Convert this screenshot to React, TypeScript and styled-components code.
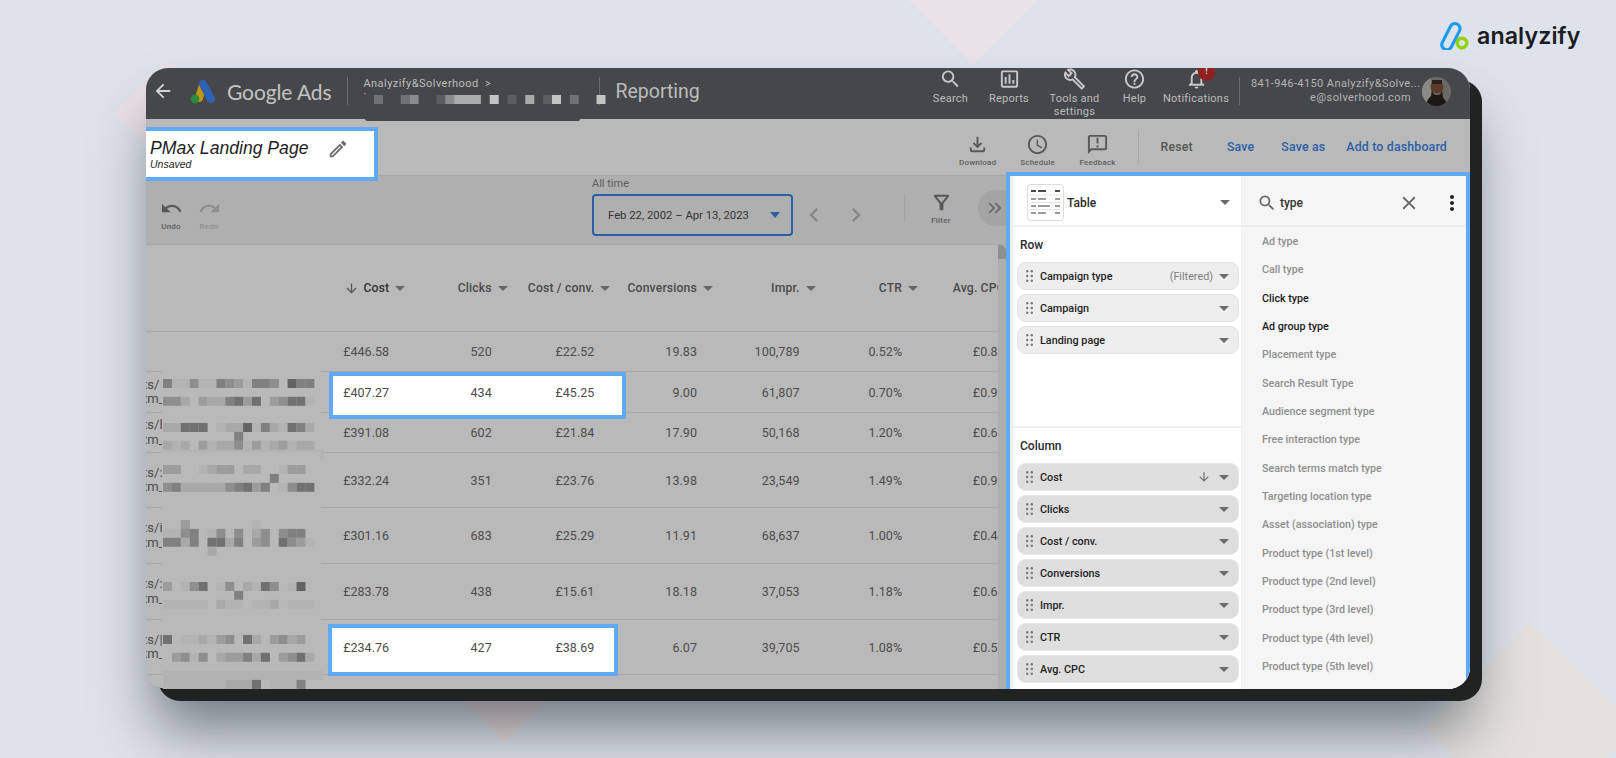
import React from "react";
import styled, { createGlobalStyle } from "styled-components";
import {
  MdArrowBack,
  MdArrowDownward,
  MdChevronLeft,
  MdChevronRight,
  MdClose,
  MdHelpOutline,
  MdKeyboardDoubleArrowRight,
  MdMoreVert,
  MdOutlineAssessment,
  MdOutlineBuild,
  MdOutlineEdit,
  MdOutlineFileDownload,
  MdOutlineFilterAlt,
  MdOutlineNotifications,
  MdOutlineAnnouncement,
  MdOutlineSchedule,
  MdRedo,
  MdSearch,
  MdUndo,
} from "react-icons/md";

const GlobalStyle = createGlobalStyle`
  html, body {
    margin: 0;
    overflow: hidden;
    background: #dee2ea;
  }
  * { box-sizing: border-box; }
`;

const Stage = styled.div`
  position: relative;
  width: 1616px;
  height: 758px;
  overflow: hidden;
  padding: 68px 0 0 146px;
  background: #dee2ea;
  font-family: Roboto, "Liberation Sans", sans-serif;
`;

const Diamond = styled.div<{ $x: number; $y: number; $r: number; $c: string }>`
  position: absolute;
  left: ${(p) => p.$x - p.$r}px;
  top: ${(p) => p.$y - p.$r}px;
  width: ${(p) => p.$r * 2}px;
  height: ${(p) => p.$r * 2}px;
  background: ${(p) => p.$c};
  clip-path: polygon(50% 0, 100% 50%, 50% 100%, 0 50%);
`;

const LogoBox = styled.div`
  position: absolute;
  left: 1440px;
  top: 22px;
  display: flex;
  align-items: center;
  gap: 8px;
  color: #1b1c24;
  font-family: Inter, sans-serif;
  font-weight: 600;
  font-size: 23.2px;
  letter-spacing: 0.1px;
`;

const Card = styled.div`
  position: relative;
  width: 1324px;
  height: 621px;
  border-radius: 22px;
  overflow: hidden;
  display: flex;
  flex-direction: column;
  background: #b9b9b9;
`;

const CardShadow = styled.div`
  position: relative;
  width: 1324px;
  height: 621px;
  border-radius: 22px;
  box-shadow: 12px 12px 0 #212222, 4px 44px 60px -6px rgba(40, 48, 56, 0.62);
`;

const TopBar = styled.header`
  position: relative;
  flex: 0 0 51px;
  min-height: 0;
  display: flex;
  align-items: center;
  padding: 0 19px 5px 6px;
  background: #46474a;
  color: #c4c4c4;
`;

const BackButton = styled.div`
  display: flex;
  width: 22px;
  margin-right: 16px;
  font-size: 22px;
  color: #d4d4d4;
`;

const BrandName = styled.div`
  margin-left: 11px;
  font-family: Lato, sans-serif;
  font-size: 21px;
  letter-spacing: -0.1px;
  color: #c3c3c3;
`;

const BarDivider = styled.div<{ $ml: number }>`
  width: 1px;
  height: 28px;
  margin-left: ${(p) => p.$ml}px;
  background: #6a6b6e;
`;

const AccountPick = styled.div`
  position: relative;
  align-self: flex-start;
  flex: none;
  width: 251px;
  height: 51px;
  padding: 9px 0 0 15px;
  font-size: 11px;
  line-height: 13px;
  letter-spacing: 0.45px;
  color: #bdbdbd;
`;

const PickDot = styled.div`
  line-height: 9px;
`;

const PickTab = styled.div`
  position: absolute;
  left: 17px;
  bottom: -2px;
  width: 215px;
  height: 3px;
  background: #46474a;
  border-radius: 0 0 2px 2px;
`;

const BlurLine = styled.div`
  position: absolute;
  left: 26px;
  top: 27px;
`;

const PageName = styled.div`
  margin-left: 15px;
  font-size: 19.5px;
  color: #bcbcbc;
`;

const Nav = styled.nav`
  display: flex;
  align-self: flex-start;
  margin-left: auto;
`;

const NavItem = styled.div<{ $w: number }>`
  position: relative;
  width: ${(p) => p.$w}px;
  margin-top: -1px;
  display: flex;
  flex-direction: column;
  align-items: center;
  font-size: 11px;
  line-height: 12.5px;
  letter-spacing: 0.25px;
  text-align: center;
  color: #bcbcbc;
  svg {
    font-size: 23px;
    margin-bottom: 2px;
    height: 24px;
    color: #c8c8c8;
  }
`;

const AlertBadge = styled.div`
  position: absolute;
  left: 40px;
  top: -3px;
  width: 17px;
  height: 17px;
  border-radius: 50%;
  background: #8f2220;
  color: #d8d8d8;
  font-size: 9px;
  font-weight: 700;
  line-height: 15px;
  letter-spacing: 0;
`;

const Account = styled.div`
  margin-left: 11px;
  width: 160px;
  text-align: right;
  font-size: 11px;
  line-height: 14px;
  letter-spacing: 0.4px;
  color: #b4b4b4;
  white-space: nowrap;
`;

const Avatar = styled.svg`
  margin-left: 11px;
  width: 29px;
  height: 29px;
  flex: none;
`;

const ReportBar = styled.div`
  flex: 0 0 57px;
  min-height: 0;
  display: flex;
  align-items: center;
  padding-right: 23px;
  border-bottom: 1px solid #a5a5a5;
  background: #b9b9b9;
`;

const TitleBox = styled.div`
  position: relative;
  z-index: 3;
  align-self: flex-start;
  flex: none;
  width: 232px;
  height: 54px;
  margin-top: 8px;
  padding: 7px 0 0 0;
  border: 4px solid #5fa9f5;
  border-left-width: 0;
  background: #fff;
  display: flex;
  justify-content: space-between;
`;

const TitleText = styled.div`
  padding-left: 4px;
  font-family: "Liberation Sans", sans-serif;
  font-style: italic;
  color: #1d1d1d;
`;

const TitleMain = styled.div`
  font-size: 17.6px;
  line-height: 20px;
`;

const TitleSub = styled.div`
  font-size: 10.5px;
  line-height: 12px;
`;

const PencilWrap = styled.div`
  margin: 0 25px 0 0;
  font-size: 22px;
  line-height: 0;
  color: #6c6c6c;
`;

const ToolGroup = styled.div`
  display: flex;
  margin-left: auto;
`;

const ToolButton = styled.div<{ $w: number; $muted?: boolean; $up?: boolean }>`
  width: ${(p) => p.$w}px;
  flex: none;
  margin-top: ${(p) => (p.$up ? -4 : 7)}px;
  display: flex;
  flex-direction: column;
  align-items: center;
  font-size: 8px;
  line-height: 11px;
  font-weight: 500;
  letter-spacing: 0.2px;
  color: ${(p) => (p.$muted ? "#8f8f8f" : "#5e5e5e")};
  svg {
    font-size: 23px;
    margin-bottom: 1px;
    color: ${(p) => (p.$muted ? "#8e8e8e" : "#585858")};
  }
`;

const ToolDivider = styled.div`
  width: 1px;
  height: 35px;
  flex: none;
  margin: 0 22px 0 10px;
  background: #a9a9a9;
`;

const ActionLink = styled.div<{ $ml: number; $plain?: boolean }>`
  margin-left: ${(p) => p.$ml}px;
  flex: none;
  font-size: 12.3px;
  font-weight: 500;
  letter-spacing: 0.2px;
  white-space: nowrap;
  color: ${(p) => (p.$plain ? "#555" : "#2a5fa8")};
`;

const Workspace = styled.div`
  flex: 1;
  display: flex;
  min-height: 0;
`;

const ReportArea = styled.div`
  width: 860px;
  flex: none;
  display: flex;
  flex-direction: column;
`;

const FilterBar = styled.div`
  flex: 0 0 69px;
  display: flex;
  align-items: center;
  padding-left: 6px;
  background: #afafaf;
  box-shadow: inset 0 -1px 0 #a6a6a6;
`;

const DateGroup = styled.div`
  width: 201px;
  flex: none;
  margin-left: 364px;
  align-self: flex-start;
  padding-top: 1px;
`;

const DateLabel = styled.div`
  font-size: 11px;
  line-height: 14px;
  margin-bottom: 3px;
  color: #5d5d5d;
`;

const DateBox = styled.div`
  height: 42px;
  display: flex;
  align-items: center;
  padding-left: 14px;
  border: 2px solid #2a5fa8;
  border-radius: 4px;
  font-size: 11.3px;
  color: #333;
  white-space: nowrap;
`;

const BlueCaret = styled.span`
  width: 0;
  height: 0;
  margin-left: 21px;
  border-left: 5.5px solid transparent;
  border-right: 5.5px solid transparent;
  border-top: 6px solid #2a5fa8;
`;

const Pager = styled.div<{ $ml: number }>`
  display: flex;
  flex: none;
  margin-left: ${(p) => p.$ml}px;
  margin-top: 8px;
  font-size: 28px;
  color: #868686;
`;

const BarLine = styled.div`
  width: 1px;
  height: 28px;
  flex: none;
  margin: -6px 16px 0 34px;
  background: #a2a2a2;
`;

const CollapseButton = styled.div`
  width: 40px;
  height: 36px;
  flex: none;
  margin: -6px 0 0 17px;
  padding-left: 6px;
  display: flex;
  align-items: center;
  border-radius: 18px;
  background: #a4a4a5;
  font-size: 22px;
  color: #6b6b6b;
`;

const TableWrap = styled.div`
  flex: 1;
  display: flex;
  min-height: 0;
`;

const Table = styled.div`
  width: 852px;
  overflow: hidden;
  background: #b9b9b9;
`;

const ScrollTrack = styled.div`
  width: 8px;
  background: #adadad;
`;

const ScrollThumb = styled.div`
  height: 14px;
  background: #8f8f8f;
  border-top-right-radius: 6px;
`;

const Row = styled.div<{ $h: number }>`
  position: relative;
  display: grid;
  grid-template-columns: 140.6px repeat(7, 102.6px);
  align-items: center;
  height: ${(p) => p.$h}px;
  border-bottom: 1px solid #a6a6a6;
  font-size: 12.5px;
  letter-spacing: 0.05px;
  color: #4c4c4c;
`;

const UrlCell = styled.div`
  font-size: 13px;
  line-height: 14.5px;
  margin-left: -3px;
  overflow: hidden;
  white-space: nowrap;
`;

const Value = styled.div`
  position: relative;
  z-index: 2;
  text-align: right;
  white-space: nowrap;
`;

const HeadCell = styled.div<{ $strong?: boolean }>`
  display: flex;
  justify-content: flex-end;
  align-items: center;
  font-size: 12.2px;
  font-weight: 500;
  letter-spacing: 0.15px;
  white-space: nowrap;
  color: ${(p) => (p.$strong ? "#333" : "#4a4a4a")};
  svg {
    font-size: 15px;
    margin-right: 4px;
    color: #555;
  }
`;

const HeadCaret = styled.span`
  flex: none;
  width: 0;
  height: 0;
  margin: 0 -16px 0 6px;
  border-left: 5px solid transparent;
  border-right: 5px solid transparent;
  border-top: 5px solid #666;
`;

const Highlight = styled.div<{ $x: number; $w: number; $top: number; $h: number }>`
  position: absolute;
  z-index: 1;
  left: ${(p) => p.$x}px;
  top: ${(p) => p.$top}px;
  width: ${(p) => p.$w}px;
  height: ${(p) => p.$h}px;
  border: 4px solid #5fa9f5;
  background: #fff;
`;

const BlurPatch = styled.div<{ $top: number }>`
  position: absolute;
  z-index: 1;
  left: 16px;
  top: -1px;
  bottom: -1px;
  width: 159px;
  padding: ${(p) => Math.max(p.$top, 0)}px 0 0 1px;
  background: #b9b9b9;
  svg {
    display: block;
    overflow: visible;
    margin-top: ${(p) => Math.min(p.$top, 0)}px;
  }
`;

const Panel = styled.aside`
  position: relative;
  z-index: 2;
  width: 464px;
  flex: none;
  margin-top: -4px;
  display: flex;
  border: 4px solid #5fa9f5;
  border-bottom: 0;
  background: #fff;
`;

const SetupColumn = styled.div`
  width: 232px;
  flex: none;
  border-left: 3px solid #efefef;
  border-right: 1px solid #efefef;
  display: flex;
  flex-direction: column;
`;

const ChartPicker = styled.div`
  flex: 0 0 51px;
  display: flex;
  align-items: center;
  padding: 4px 0 0 14px;
  border-bottom: 2px solid #efefef;
  font-size: 12px;
  font-weight: 500;
  color: #2a2a2a;
`;

const SetupSection = styled.section<{ $h: number; $line?: boolean }>`
  flex: 0 0 ${(p) => p.$h}px;
  padding: 0 2px 0 4px;
  border-bottom: ${(p) => (p.$line ? "2px solid #efefef" : "0")};
`;

const SectionLabel = styled.div<{ $h: number; $top: number }>`
  height: ${(p) => p.$h}px;
  padding: ${(p) => p.$top}px 0 0 3px;
  font-size: 12px;
  line-height: 16px;
  font-weight: 500;
  color: #2b2b2b;
`;

const ChipList = styled.div`
  display: flex;
  flex-direction: column;
  gap: 4px;
`;

const Chip = styled.div<{ $dark?: boolean }>`
  height: 28px;
  display: flex;
  align-items: center;
  padding: 0 9px 0 8px;
  border-radius: 9px;
  border: 1px solid ${(p) => (p.$dark ? "#e6e6e6" : "#e2e2e2")};
  background: ${(p) => (p.$dark ? "#dedede" : "#ededed")};
  font-size: 10.8px;
  font-weight: 500;
  color: #1f1f1f;
  white-space: nowrap;
`;

const DragDots = styled.svg`
  width: 7px;
  height: 12px;
  margin-right: 7px;
  flex: none;
`;

const ChipNote = styled.span`
  margin-left: auto;
  font-weight: 400;
  color: #7d7d7d;
`;

const ChipArrow = styled.span`
  margin-left: auto;
  display: flex;
  font-size: 14px;
  margin-right: 8px;
  color: #6d6d6d;
`;

const ChipCaret = styled.span<{ $auto?: boolean; $ml?: number }>`
  flex: none;
  width: 0;
  height: 0;
  margin-left: ${(p) => (p.$auto ? "auto" : `${p.$ml ?? 0}px`)};
  border-left: 5px solid transparent;
  border-right: 5px solid transparent;
  border-top: 5px solid #6b6b6b;
`;

const PickerCaret = styled(ChipCaret)`
  margin-right: 11px;
`;

const TableIcon = styled.svg`
  width: 37px;
  height: 37px;
  margin-right: 3px;
  flex: none;
`;

const FieldColumn = styled.div`
  flex: 1;
  display: flex;
  flex-direction: column;
  background: #f5f5f5;
`;

const SearchRow = styled.div`
  flex: 0 0 51px;
  display: flex;
  align-items: center;
  padding: 4px 0 0 15px;
  border-bottom: 2px solid #ececec;
  font-size: 12px;
  font-weight: 500;
  color: #333;
  svg {
    flex: none;
  }
`;

const SearchIcon = styled(MdSearch)`
  font-size: 20px;
  margin-right: 3px;
  color: #666;
`;

const CloseIcon = styled(MdClose)`
  font-size: 22px;
  margin-left: 95px;
  color: #666;
`;

const MoreIcon = styled(MdMoreVert)`
  font-size: 24px;
  margin-left: 20px;
  color: #222;
`;

const FieldList = styled.div`
  padding: 1px 0 0 20px;
`;

const FieldItem = styled.div<{ $on?: boolean }>`
  height: 28.33px;
  line-height: 28px;
  font-size: 10.7px;
  font-weight: 500;
  color: ${(p) => (p.$on ? "#1b1b1b" : "#8f8f8f")};
  white-space: nowrap;
`;

const rowTones = ["", "#b3b3b3", "#a8a8a8", "#9c9c9c", "#8e8e8e", "#808080", "#717171", "#636363"];
const barTones = ["", "#5c5d60", "#707174", "#8a8a8c", "#aaaaaa", "#c4c4c4"];

function Mosaic({ lines, tones, size = 8.9 }: { lines: string[]; tones: string[]; size?: number }) {
  return (
    <svg width={size * 26} height={size * lines.length} style={{ display: "block" }}>
      {lines.map((line, y) =>
        line.split("").map((d, x) =>
          d === "0" ? null : (
            <rect key={`${x}-${y}`} x={x * size} y={y * size} width={size + 0.1} height={size + 0.1} fill={tones[Number(d)]} />
          )
        )
      )}
    </svg>
  );
}

function Dots() {
  return (
    <DragDots viewBox="0 0 7 12">
      {[1.2, 6, 10.8].map((y) =>
        [1.2, 5.8].map((x) => <circle key={`${x}-${y}`} cx={x} cy={y} r="1.2" fill="#777" />)
      )}
    </DragDots>
  );
}

const BAND = "111111111111111111";

const rows = [
  { h: 41, url: ["ts/", "tm_"], top: 7.5, hl: { x: 183, w: 297, top: 0, h: 47 },
    mosaic: ["51141154315540755", "", "44203225636034661"],
    v: ["£407.27", "434", "£45.25", "9.00", "61,807", "0.70%", "£0.91"] },
  { h: 40, url: ["ts/l", "tm_"], top: 11,
    mosaic: ["22666012271521652", "00000000500000000", "21203122413123122", BAND],
    v: ["£391.08", "602", "£21.84", "17.90", "50,168", "1.20%", "£0.65"] },
  { h: 55, url: ["ts/:", "tm_"], top: 13,
    mosaic: ["33001233022001330", "00000000000050000", "45222224563501466"],
    v: ["£332.24", "351", "£23.76", "13.98", "23,549", "1.49%", "£0.95"] },
  { h: 56, url: ["ts/i", "tm_"], top: 13,
    mosaic: ["00300000001000000", "11450140402404550", "55250662503406431", "00000200000000000"],
    v: ["£301.16", "683", "£25.29", "11.91", "68,637", "1.00%", "£0.44"] },
  { h: 56, url: ["ts/:", "tm_"], top: 19,
    mosaic: ["30146014021640170", "00000000500000000", "11111021101120111"],
    v: ["£283.78", "438", "£15.61", "18.18", "37,053", "1.18%", "£0.65"] },
  { h: 55, url: ["ts/|", "tm_"], top: 16, hl: { x: 182, w: 290, top: 4, h: 52 },
    mosaic: ["60112134062034230", "", "03414023352603462"],
    v: ["£234.76", "427", "£38.69", "6.07", "39,705", "1.08%", "£0.55"] },
];

const rowFields = ["Campaign type", "Campaign", "Landing page"];
const columnFields = ["Cost", "Clicks", "Cost / conv.", "Conversions", "Impr.", "CTR", "Avg. CPC"];
const fields = [
  ["Ad type"], ["Call type"], ["Click type", 1], ["Ad group type", 1], ["Placement type"],
  ["Search Result Type"], ["Audience segment type"], ["Free interaction type"], ["Search terms match type"],
  ["Targeting location type"], ["Asset (association) type"], ["Product type (1st level)"],
  ["Product type (2nd level)"], ["Product type (3rd level)"], ["Product type (4th level)"], ["Product type (5th level)"],
] as [string, number?][];

const headers = ["Clicks", "Cost / conv.", "Conversions", "Impr.", "CTR"];

export default function App() {
  return (
    <>
      <GlobalStyle />
      <Stage>
        <Diamond $x={167} $y={113} $r={53} $c="#e9e1e5" />
        <Diamond $x={973} $y={-5} $r={70} $c="#e9e2e7" />
        <Diamond $x={505} $y={700} $r={42} $c="#e8dcdc" />
        <Diamond $x={1530} $y={728} $r={106} $c="#e3e0de" />

        <LogoBox>
          <svg width="29" height="28" viewBox="0 0 29 28" fill="none">
            <rect x="6.2" y="0.6" width="10" height="28" rx="5" transform="rotate(27 11 14)" stroke="#1d9bf0" strokeWidth="3.2" />
            <circle cx="22" cy="21" r="4.8" stroke="#8fd400" strokeWidth="3.4" />
          </svg>
          analyzify
        </LogoBox>

        <CardShadow>
          <Card>
            <TopBar>
              <BackButton>
                <MdArrowBack />
              </BackButton>
              <svg width="26" height="25" viewBox="0 0 26 25" fill="none">
                <line x1="9" y1="19" x2="13" y2="6" stroke="#c2960f" strokeWidth="8" strokeLinecap="round" />
                <line x1="13" y1="5" x2="21" y2="20" stroke="#2f62b5" strokeWidth="8" strokeLinecap="round" />
                <circle cx="5" cy="20" r="4.4" fill="#2c8a3f" />
              </svg>
              <BrandName>Google Ads</BrandName>
              <BarDivider $ml={16} />
              <AccountPick>
                <span>Analyzify&amp;Solverhood &nbsp;&gt;</span>
                <PickDot>·</PickDot>
                <BlurLine>
                  <Mosaic tones={barTones} lines={["20023001344405010401502005"]} />
                </BlurLine>
                <PickTab />
              </AccountPick>
              <BarDivider $ml={0} />
              <PageName>Reporting</PageName>
              <Nav>
                <NavItem $w={59}>
                  <MdSearch />
                  Search
                </NavItem>
                <NavItem $w={58}>
                  <MdOutlineAssessment />
                  Reports
                </NavItem>
                <NavItem $w={73}>
                  <MdOutlineBuild />
                  Tools and settings
                </NavItem>
                <NavItem $w={47}>
                  <MdHelpOutline />
                  Help
                </NavItem>
                <NavItem $w={76}>
                  <AlertBadge>!</AlertBadge>
                  <MdOutlineNotifications />
                  Notifications
                </NavItem>
              </Nav>
              <BarDivider $ml={5} />
              <Account>
                841-946-4150 Analyzify&amp;Solve...
                <br />
                e@solverhood.com
              </Account>
              <Avatar viewBox="0 0 29 29">
                <defs>
                  <clipPath id="av">
                    <circle cx="14.5" cy="14.5" r="14.5" />
                  </clipPath>
                </defs>
                <g clipPath="url(#av)">
                  <rect width="29" height="29" fill="#6c6a66" />
                  <rect x="0" y="0" width="9" height="29" fill="#8c8a86" />
                  <circle cx="15" cy="10" r="6.5" fill="#5d3c2c" />
                  <path d="M10 13c1 7 9 7 10 0l1 7c-2 4-10 4-12 0z" fill="#221a16" />
                  <path d="M4 29c1-8 5-11 10-11s10 3 11 11z" fill="#1b1717" />
                  <rect x="10" y="3" width="10" height="4" fill="#2b211c" />
                </g>
              </Avatar>
            </TopBar>

            <ReportBar>
              <TitleBox>
                <TitleText>
                  <TitleMain>PMax Landing Page</TitleMain>
                  <TitleSub>Unsaved</TitleSub>
                </TitleText>
                <PencilWrap>
                  <MdOutlineEdit />
                </PencilWrap>
              </TitleBox>
              <ToolGroup>
                <ToolButton $w={60}>
                  <MdOutlineFileDownload />
                  Download
                </ToolButton>
                <ToolButton $w={60}>
                  <MdOutlineSchedule />
                  Schedule
                </ToolButton>
                <ToolButton $w={60}>
                  <MdOutlineAnnouncement />
                  Feedback
                </ToolButton>
              </ToolGroup>
              <ToolDivider />
              <ActionLink $ml={0} $plain>Reset</ActionLink>
              <ActionLink $ml={34}>Save</ActionLink>
              <ActionLink $ml={27}>Save as</ActionLink>
              <ActionLink $ml={21}>Add to dashboard</ActionLink>
            </ReportBar>

            <Workspace>
              <ReportArea>
                <FilterBar>
                  <ToolButton $w={38}>
                    <MdUndo />
                    Undo
                  </ToolButton>
                  <ToolButton $w={38} $muted>
                    <MdRedo />
                    Redo
                  </ToolButton>
                  <DateGroup>
                    <DateLabel>All time</DateLabel>
                    <DateBox>
                      Feb 22, 2002 – Apr 13, 2023
                      <BlueCaret />
                    </DateBox>
                  </DateGroup>
                  <Pager $ml={7}>
                    <MdChevronLeft />
                  </Pager>
                  <Pager $ml={14}>
                    <MdChevronRight />
                  </Pager>
                  <BarLine />
                  <ToolButton $w={40} $up>
                    <MdOutlineFilterAlt />
                    Filter
                  </ToolButton>
                  <CollapseButton>
                    <MdKeyboardDoubleArrowRight />
                  </CollapseButton>
                </FilterBar>
                <TableWrap>
                  <Table>
                    <Row $h={87}>
                      <div />
                      <HeadCell $strong>
                        <MdArrowDownward />
                        Cost
                        <HeadCaret />
                      </HeadCell>
                      {headers.map((h) => (
                        <HeadCell key={h}>
                          {h}
                          <HeadCaret />
                        </HeadCell>
                      ))}
                      <HeadCell>Avg. CPC</HeadCell>
                    </Row>
                    <Row $h={40}>
                      <div />
                      {["£446.58", "520", "£22.52", "19.83", "100,789", "0.52%", "£0.86"].map((v) => (
                        <Value key={v}>{v}</Value>
                      ))}
                    </Row>
                    {rows.map((r) => (
                      <Row key={r.v[0]} $h={r.h}>
                        <UrlCell>
                          {r.url[0]}
                          <br />
                          {r.url[1]}
                        </UrlCell>
                        <BlurPatch $top={r.top}>
                          <Mosaic tones={rowTones} lines={r.mosaic} />
                        </BlurPatch>
                        {r.hl && <Highlight $x={r.hl.x} $w={r.hl.w} $top={r.hl.top} $h={r.hl.h} />}
                        {r.v.map((v) => (
                          <Value key={v}>{v}</Value>
                        ))}
                      </Row>
                    ))}
                    <Row $h={40}>
                      <UrlCell>ts/v</UrlCell>
                      <BlurPatch $top={-3}>
                        <Mosaic tones={rowTones} lines={[BAND, "11111112226011150"]} />
                      </BlurPatch>
                    </Row>
                  </Table>
                  <ScrollTrack>
                    <ScrollThumb />
                  </ScrollTrack>
                </TableWrap>
              </ReportArea>

              <Panel>
                <SetupColumn>
                  <ChartPicker>
                    <TableIcon viewBox="0 0 37 37">
                      <rect x="0.5" y="0.5" width="36" height="36" rx="3" fill="#fff" stroke="#dcdcdc" />
                      {[7, 15, 22, 29].map((y, i) => (
                        <g key={y} fill={i === 0 ? "#4a4a4a" : "#9b9b9b"}>
                          <rect x="4" y={y - 1} width="5" height="2" />
                          <rect x="11" y={y - 1} width={i === 2 ? 12 : 8} height="2" />
                          <rect x="28" y={y - 1} width="5" height="2" />
                        </g>
                      ))}
                      {[11, 18.5, 25.5].map((y) => (
                        <line key={y} x1="3" x2="34" y1={y} y2={y} stroke="#e2e2e2" />
                      ))}
                    </TableIcon>
                    Table
                    <PickerCaret $auto />
                  </ChartPicker>
                  <SetupSection $h={201} $line>
                    <SectionLabel $h={35} $top={10}>Row</SectionLabel>
                    <ChipList>
                      {rowFields.map((f, i) => (
                        <Chip key={f}>
                          <Dots />
                          {f}
                          {i === 0 && <ChipNote>(Filtered)</ChipNote>}
                          <ChipCaret $auto={i !== 0} $ml={6} />
                        </Chip>
                      ))}
                    </ChipList>
                  </SetupSection>
                  <SetupSection $h={260}>
                    <SectionLabel $h={35} $top={10}>Column</SectionLabel>
                    <ChipList>
                      {columnFields.map((f, i) => (
                        <Chip key={f} $dark>
                          <Dots />
                          {f}
                          {i === 0 && (
                            <ChipArrow>
                              <MdArrowDownward />
                            </ChipArrow>
                          )}
                          <ChipCaret $auto={i !== 0} />
                        </Chip>
                      ))}
                    </ChipList>
                  </SetupSection>
                </SetupColumn>
                <FieldColumn>
                  <SearchRow>
                    <SearchIcon />
                    type
                    <CloseIcon />
                    <MoreIcon />
                  </SearchRow>
                  <FieldList>
                    {fields.map(([name, on]) => (
                      <FieldItem key={name} $on={!!on}>
                        {name}
                      </FieldItem>
                    ))}
                  </FieldList>
                </FieldColumn>
              </Panel>
            </Workspace>
          </Card>
        </CardShadow>
      </Stage>
    </>
  );
}
